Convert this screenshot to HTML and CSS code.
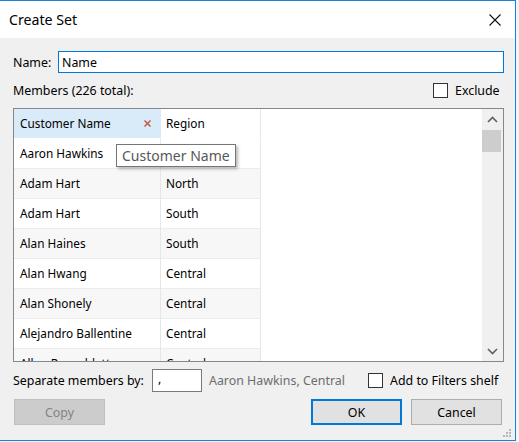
FILE: index.html
```html
<!DOCTYPE html>
<html>
<head>
<meta charset="utf-8">
<title>Create Set</title>
<link rel="stylesheet" href="styles.css">
</head>
<body>
<div class="window">
  <div class="titlebar">
    <span class="title">Create Set</span>
    <svg class="close" width="12" height="12" viewBox="0 0 12 12"><path d="M0.5 0.5 L11.5 11.5 M11.5 0.5 L0.5 11.5" stroke="#111" stroke-width="1.1" fill="none"/></svg>
  </div>
  <div class="content">
    <div class="name-row">
      <span class="name-label">Name:</span>
      <div class="text-input name-input">Name</div>
    </div>
    <div class="members-row">
      <span>Members (226 total):</span>
      <div class="check-group exclude"><span class="box"></span><span>Exclude</span></div>
    </div>
    <div class="table">
      <div class="col col-name">
        <div class="cell head head-sel"><span>Customer Name</span><svg class="xmark" width="7" height="7" viewBox="0 0 7 7"><path d="M0.5 0.5 L6.5 6.5 M6.5 0.5 L0.5 6.5" stroke="#c25a3f" stroke-width="1.5" fill="none"/></svg></div>
        <div class="cell">Aaron Hawkins</div>
        <div class="cell alt">Adam Hart</div>
        <div class="cell">Adam Hart</div>
        <div class="cell alt">Alan Haines</div>
        <div class="cell">Alan Hwang</div>
        <div class="cell alt">Alan Shonely</div>
        <div class="cell">Alejandro Ballentine</div>
        <div class="cell alt">Allen Rosenblatt</div>
      </div>
      <div class="col col-region">
        <div class="cell head">Region</div>
        <div class="cell"></div>
        <div class="cell alt">North</div>
        <div class="cell">South</div>
        <div class="cell alt">South</div>
        <div class="cell">Central</div>
        <div class="cell alt">Central</div>
        <div class="cell">Central</div>
        <div class="cell alt">Central</div>
      </div>
      <div class="empty"></div>
      <div class="scrollbar">
        <svg class="arrow" width="11" height="7" viewBox="0 0 11 7"><path d="M1 6 L5.5 1.5 L10 6" stroke="#606060" stroke-width="1.6" fill="none"/></svg>
        <div class="thumb"></div>
        <div class="track"></div>
        <svg class="arrow" width="11" height="7" viewBox="0 0 11 7"><path d="M1 1 L5.5 5.5 L10 1" stroke="#606060" stroke-width="1.6" fill="none"/></svg>
      </div>
      <div class="tooltip">Customer Name</div>
    </div>
    <div class="sep-row">
      <span class="sep-label">Separate members by:</span>
      <div class="text-input sep-input">,</div>
      <span class="preview">Aaron Hawkins, Central</span>
      <div class="check-group"><span class="box"></span><span>Add to Filters shelf</span></div>
    </div>
    <div class="btn-row">
      <div class="btn disabled">Copy</div>
      <div class="spacer"></div>
      <div class="btn default">OK</div>
      <div class="btn cancel">Cancel</div>
    </div>
  </div>
  <div class="grip">
    <span class="dot d1"></span><span class="dot d2"></span><span class="dot d3"></span>
    <span class="dot d4"></span><span class="dot d5"></span><span class="dot d6"></span>
  </div>
</div>
</body>
</html>
```
FILE: styles.css
```css
* { box-sizing: border-box; }
html, body { margin: 0; padding: 0; }
body {
  background: #f4f4f4;
  font-family: "Noto Sans", "Open Sans", sans-serif;
  font-size: 12.4px;
  color: #000;
  width: 519px;
  height: 442px;
  overflow: hidden;
}
.window {
  position: relative;
  width: 516px;
  height: 441px;
  border-top: 1px solid #1883d7;
  border-right: 1px solid #1883d7;
  border-bottom: 1px solid #1883d7;
  background: #f0f0f0;
  display: flex;
  flex-direction: column;
}
.titlebar {
  height: 37px;
  background: #fff;
  display: flex;
  align-items: center;
  padding-left: 9px;
  padding-right: 14px;
}
.title {
  font-size: 14.2px;
  flex: 1;
  padding-bottom: 1px;
}
.close { display: block; margin-top: 1px; }
.content {
  padding: 13px 11px 0 13px;
  display: flex;
  flex-direction: column;
}
.name-row {
  display: flex;
  align-items: center;
  height: 22px;
}
.name-label { width: 45px; }
.text-input {
  height: 22px;
  background: #fff;
  border: 1px solid #7a7a7a;
  padding: 0 4px;
  display: flex;
  align-items: center;
}
.name-input {
  flex: 1;
  border-color: #0078d7;
  padding-left: 3px;
}
.members-row {
  display: flex;
  align-items: center;
  justify-content: space-between;
  height: 15px;
  margin-top: 10px;
  margin-bottom: 10px;
}
.check-group {
  display: flex;
  align-items: center;
}
.exclude { width: 71px; }
.box {
  width: 15px;
  height: 15px;
  border: 1px solid #333;
  background: #fff;
  margin-right: 7px;
  flex: none;
}
.table {
  position: relative;
  height: 254px;
  border: 1px solid #828790;
  background: #fff;
  display: flex;
  overflow: visible;
  font-size: 11.8px;
}
.col { display: flex; flex-direction: column; overflow: hidden; }
.col-name { width: 147px; }
.col-region { width: 100px; }
.cell {
  height: 30px;
  flex: none;
  border-bottom: 1px solid #ececec;
  border-right: 1px solid #e6e6e6;
  display: flex;
  align-items: center;
  padding-left: 6px;
  padding-bottom: 1px;
  white-space: nowrap;
}
.col-region .cell { padding-left: 5px; }
.cell.alt { background: #f7f7f7; }
.cell.head { border-bottom-color: #fff; }
.head-sel {
  background: #d9eaf8;
  border-right-color: #d9eaf8;
  border-bottom-color: #d9eaf8;
  justify-content: space-between;
  padding-right: 9px;
}
.xmark { display: block; }
.empty { flex: 1; }
.scrollbar {
  width: 21px;
  background: #f0f0f0;
  display: flex;
  flex-direction: column;
  align-items: center;
}
.arrow { display: block; margin-top: 7px; margin-left: -1px; flex: none; }
.scrollbar .arrow:last-child { margin-top: 0; margin-bottom: 6px; }
.thumb {
  width: 19px;
  height: 22px;
  background: #cdcdcd;
  margin-top: 7px;
  align-self: flex-start;
}
.track { flex: 1; }
.tooltip {
  position: absolute;
  left: 102px;
  top: 35px;
  width: 120px;
  height: 23px;
  background: #fff;
  border: 1px solid #767676;
  box-shadow: 2px 2px 3px rgba(0,0,0,0.28);
  color: #575757;
  font-size: 14px;
  padding-left: 5px;
  display: flex;
  align-items: center;
  white-space: nowrap;
}
.sep-row {
  display: flex;
  align-items: center;
  height: 23px;
  margin-top: 7px;
}
.sep-label { width: 139px; }
.sep-input { width: 50px; height: 23px; padding-left: 5px; padding-bottom: 4px; }
.preview { color: #6d6d6d; width: 166px; padding-left: 7px; }
.btn-row {
  display: flex;
  margin-top: 7px;
  margin-left: 1px;
  margin-right: 2px;
}
.spacer { flex: 1; }
.btn {
  width: 91px;
  height: 26px;
  display: flex;
  align-items: center;
  justify-content: center;
  background: #e1e1e1;
  border: 1px solid #adadad;
}
.btn.disabled {
  background: #cccccc;
  border-color: #bfbfbf;
  color: #838383;
}
.btn.default { border: 2px solid #0078d7; margin-right: 9px; }
.grip {
  position: absolute;
  right: 3px;
  bottom: 2px;
  width: 9px;
  height: 9px;
}
.dot { position: absolute; width: 2px; height: 2px; background: #b8b8b8; }
.d1 { left: 6px; top: 0; }
.d2 { left: 3px; top: 3px; }
.d3 { left: 6px; top: 3px; }
.d4 { left: 0; top: 6px; }
.d5 { left: 3px; top: 6px; }
.d6 { left: 6px; top: 6px; }
```
